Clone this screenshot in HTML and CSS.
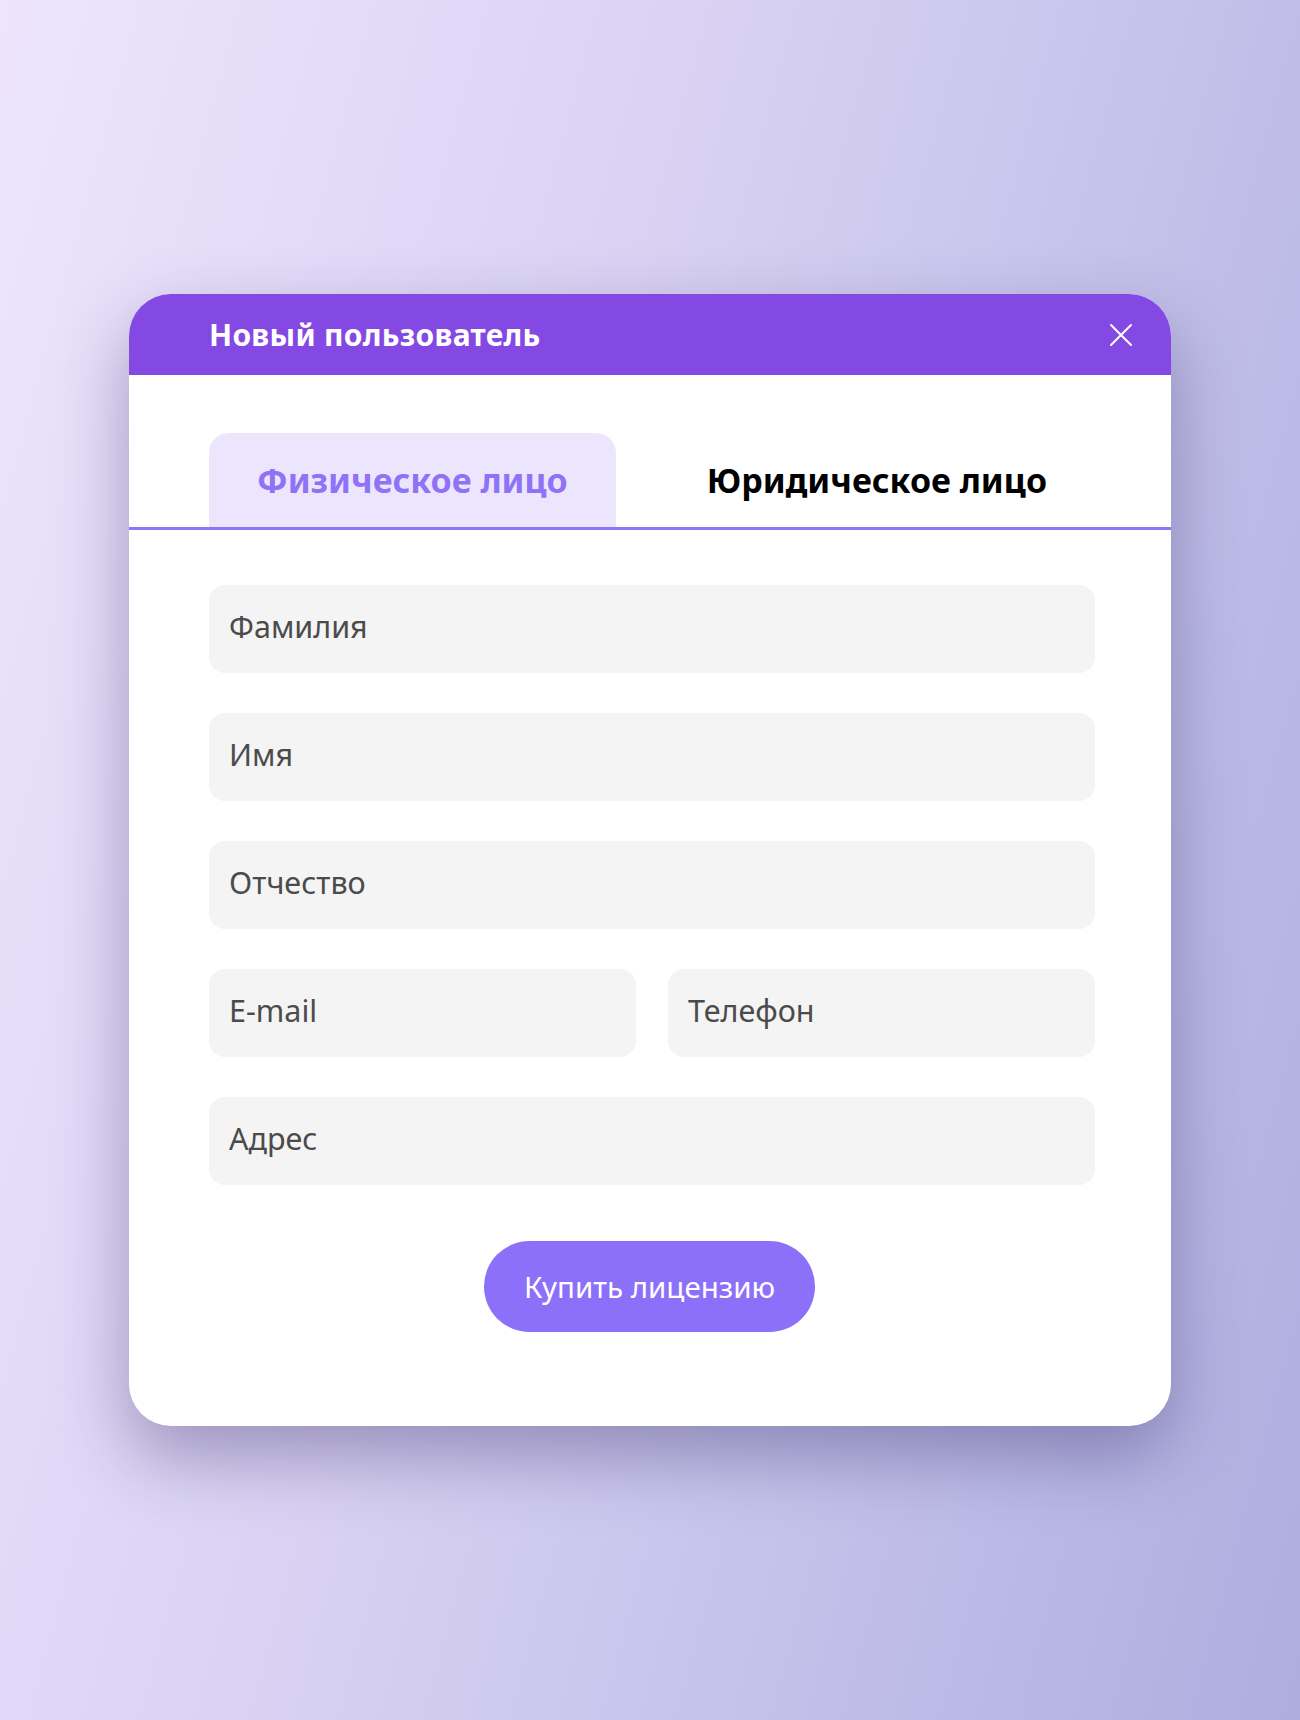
FILE: index.html
```html
<!DOCTYPE html>
<html lang="ru">

<head>
    <meta charset="UTF-8">
    <meta name="viewport" content="width=device-width, initial-scale=1.0">
    <title>Новый пользователь</title>
    <link rel="stylesheet" href="styles.css">
</head>

<body>
    <div class="modal">
        <div class="modal__header">
            <h2 class="modal__title">Новый пользователь</h2>
            <button class="modal__close" type="button" aria-label="Закрыть">
                <svg width="24" height="24" viewBox="0 0 24 24" fill="none" stroke="#fff" stroke-width="2" stroke-linecap="round">
                    <path d="M2 2 L22 22 M22 2 L2 22" />
                </svg>
            </button>
        </div>

        <div class="tabs">
            <button class="tabs__item tabs__item--active" type="button">Физическое лицо</button>
            <button class="tabs__item" type="button">Юридическое лицо</button>
        </div>

        <form class="form">
            <input class="form__field" type="text" placeholder="Фамилия">
            <input class="form__field" type="text" placeholder="Имя">
            <input class="form__field" type="text" placeholder="Отчество">
            <div class="form__row">
                <input class="form__field" type="email" placeholder="E-mail">
                <input class="form__field" type="tel" placeholder="Телефон">
            </div>
            <input class="form__field" type="text" placeholder="Адрес">
            <button class="form__submit" type="button">Купить лицензию</button>
        </form>
    </div>
</body>

</html>
```

FILE: styles.css
```css
* {
    box-sizing: border-box;
}

html,
body {
    margin: 0;
    height: 100%;
}

body {
    font-family: "Noto Sans", "Open Sans", sans-serif;
    min-height: 1720px;
    display: flex;
    align-items: center;
    justify-content: center;
    background: linear-gradient(105deg, #eee5fd 0%, #d9d2f3 40%, #bfbde8 75%, #adaedf 100%);
}

.modal {
    width: 1042px;
    background: #fff;
    border-radius: 42px;
    overflow: hidden;
    box-shadow: 0 30px 70px rgba(50, 40, 100, 0.38);
}

.modal__header {
    height: 81px;
    background: #8549e3;
    display: flex;
    align-items: center;
    justify-content: space-between;
    padding: 0 38px 0 80px;
}

.modal__title {
    margin: 0;
    color: #fff;
    font-size: 30px;
    font-weight: 700;
    letter-spacing: 0.3px;
}

.modal__close {
    border: 0;
    padding: 0;
    background: none;
    width: 24px;
    height: 24px;
    cursor: pointer;
}

.modal__close svg {
    display: block;
}

.tabs {
    display: flex;
    justify-content: space-between;
    margin-top: 58px;
    padding: 0 76px 0 80px;
    border-bottom: 3px solid #8f74f5;
}

.tabs__item {
    height: 94px;
    padding: 0 48px;
    border: 0;
    border-radius: 20px 20px 0 0;
    background: none;
    font-family: inherit;
    font-size: 34px;
    font-weight: 700;
    color: #000;
    cursor: pointer;
}

.tabs__item--active {
    background: #ebe6fe;
    color: #8f72f5;
}

.form {
    display: flex;
    flex-direction: column;
    gap: 40px;
    padding: 55px 76px 94px 80px;
}

.form__row {
    display: flex;
    gap: 32px;
}

.form__row .form__field {
    flex: 1;
    min-width: 0;
}

.form__field {
    height: 88px;
    border: 0;
    border-radius: 16px;
    background: #f4f4f4;
    padding: 0 20px 6px;
    font-family: inherit;
    font-size: 30.5px;
    color: #333;
    outline: none;
}

.form__field::placeholder {
    color: #4b4b4b;
    opacity: 1;
}

.form__submit {
    align-self: center;
    margin: 16px 5px 0 0;
    width: 331px;
    height: 91px;
    border: 0;
    border-radius: 46px;
    background: #8c70fa;
    color: #fff;
    font-family: inherit;
    font-size: 29.5px;
    cursor: pointer;
}
```
